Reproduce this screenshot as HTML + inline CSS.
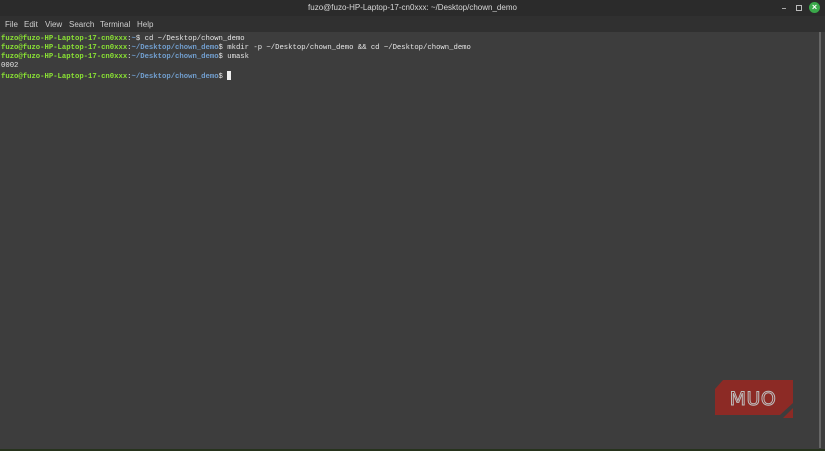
<!DOCTYPE html>
<html><head><meta charset="utf-8"><style>
html,body{margin:0;padding:0;width:825px;height:451px;overflow:hidden;background:#3d3d3d;}
.title{position:absolute;left:0;top:0;width:825px;height:16px;background:#2b2b2b;color:#d8d8d8;font:8px "Liberation Sans",sans-serif;text-align:center;line-height:16px;}
.menu{position:absolute;left:0;top:16px;width:825px;height:16px;background:#303030;color:#cfcfcf;font:8px "Liberation Sans",sans-serif;line-height:17px;}
.menu span{position:absolute;top:0;}
.term{position:absolute;left:1px;top:32px;font:7.25px "Liberation Mono",monospace;line-height:9.1px;color:#e6e6e6;white-space:pre;}
.g{color:#8ae234;font-weight:bold;}
.b{color:#729fcf;font-weight:bold;}
.cur{display:inline-block;width:4px;height:9px;background:#eee;vertical-align:-2px;}
.sb{position:absolute;left:819px;top:32px;width:2px;height:416px;background:#666;}
.bot{position:absolute;left:0;top:449px;width:825px;height:2px;background:#26331c;}
</style></head><body>
<div class="title">fuzo@fuzo-HP-Laptop-17-cn0xxx: ~/Desktop/chown_demo</div>
<div style="position:absolute;left:782px;top:8px;width:4px;height:1px;background:#aaa"></div>
<div style="position:absolute;left:796px;top:5px;width:4px;height:4px;border:1px solid #bbb"></div>
<div style="position:absolute;left:809px;top:2px;width:11px;height:11px;border-radius:50%;background:#3aa84a;color:#fff;font:bold 9px 'Liberation Sans',sans-serif;text-align:center;line-height:11px">×</div>
<div class="menu"><span style="left:5px">File</span><span style="left:24px">Edit</span><span style="left:45px">View</span><span style="left:69px">Search</span><span style="left:100px">Terminal</span><span style="left:137px">Help</span></div>
<div class="term" style="top:35px"><span class="g">fuzo@fuzo-HP-Laptop-17-cn0xxx</span>:<span class="b">~</span>$ cd ~/Desktop/chown_demo
<span class="g">fuzo@fuzo-HP-Laptop-17-cn0xxx</span>:<span class="b">~/Desktop/chown_demo</span>$ mkdir -p ~/Desktop/chown_demo &amp;&amp; cd ~/Desktop/chown_demo
<span class="g">fuzo@fuzo-HP-Laptop-17-cn0xxx</span>:<span class="b">~/Desktop/chown_demo</span>$ umask
0002
<span class="g">fuzo@fuzo-HP-Laptop-17-cn0xxx</span>:<span class="b">~/Desktop/chown_demo</span>$ <span class="cur"></span></div>
<div class="sb"></div>
<svg style="position:absolute;left:713px;top:378px" width="82" height="42">
<polygon points="10,2 80,2 80,25 67,37 2,37 2,11" fill="#8c2a25"/>
<polygon points="80,30 80,40 70,40" fill="#8c2a25"/>
<text x="40" y="27" text-anchor="middle" font-family="DejaVu Sans,sans-serif" font-size="19" fill="none" stroke="#bdbdbd" stroke-width="1" letter-spacing="0.5">MUO</text>
</svg>
<div class="bot"></div>
</body></html>
